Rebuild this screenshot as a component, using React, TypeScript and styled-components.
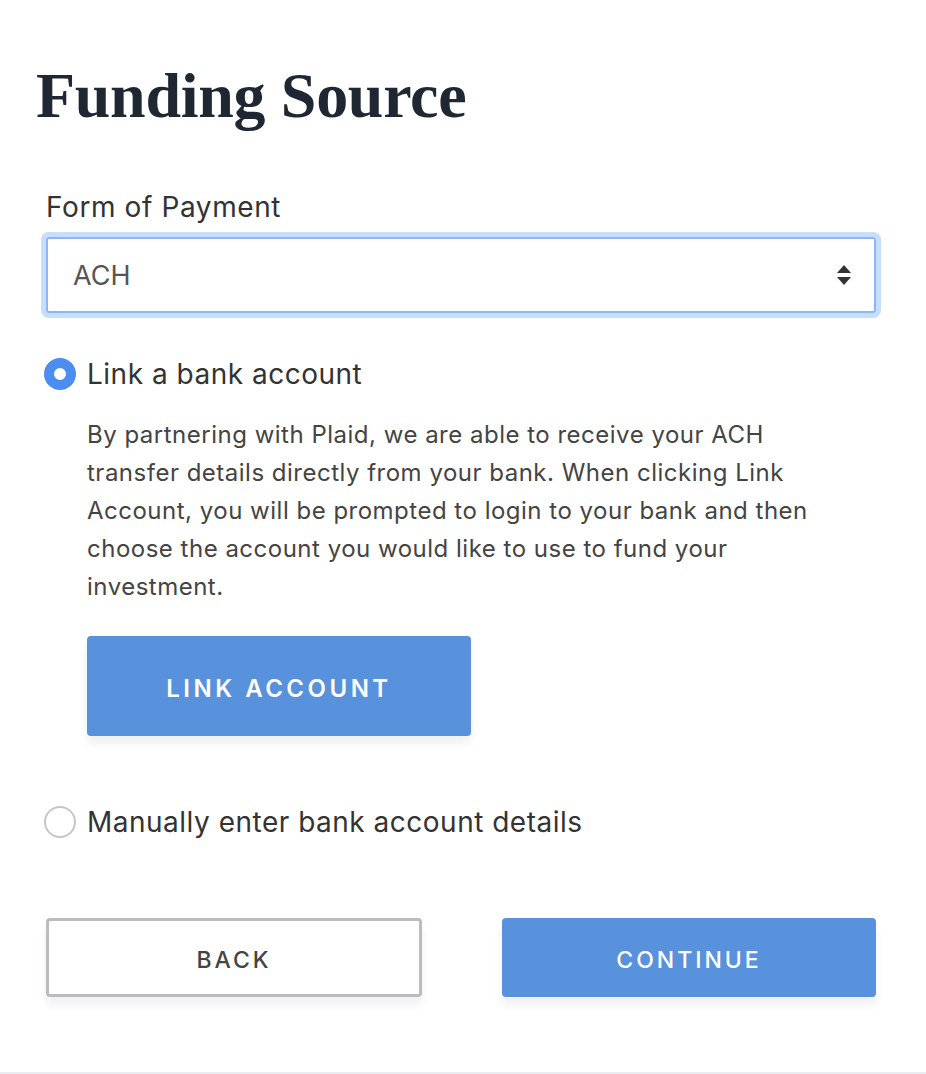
import React from 'react';
import styled, { createGlobalStyle } from 'styled-components';

const Global = createGlobalStyle`
  html, body {
    margin: 0;
    padding: 0;
    background: #ffffff;
  }
  body {
    font-family: Inter, "Noto Sans", sans-serif;
    color: #333333;
  }
`;

const Page = styled.div`
  width: 926px;
  height: 1074px;
  box-sizing: border-box;
  border-bottom: 2px solid #e9edf2;
  padding: 58px 50px 0 46px;
  display: flex;
  flex-direction: column;
`;

const Title = styled.h1`
  margin: 0 0 0 -10px;
  font-family: "Liberation Serif", "Times New Roman", serif;
  font-weight: bold;
  font-size: 64px;
  line-height: 76px;
  color: #1f2733;
  letter-spacing: -0.3px;
`;

const Label = styled.div`
  margin-top: 55px;
  font-size: 28px;
  line-height: 36px;
  letter-spacing: 0.6px;
  color: #333333;
`;

const SelectBox = styled.div`
  margin-top: 12px;
  height: 76px;
  box-sizing: border-box;
  border: 2px solid #8db7f2;
  border-radius: 3px;
  box-shadow: 0 0 0 5px #c6ddfb;
  display: flex;
  align-items: center;
  justify-content: space-between;
  padding: 0 22px 0 25px;
  font-size: 27px;
  color: #555555;
`;

const Options = styled.div`
  margin-top: 41px;
  display: flex;
  flex-direction: column;
`;

const OptionRow = styled.div`
  display: flex;
  align-items: center;
  gap: 11px;
  margin-left: -2px;
`;

const Radio = styled.span<{ checked?: boolean }>`
  width: 32px;
  height: 32px;
  box-sizing: border-box;
  border-radius: 50%;
  flex: none;
  background: #ffffff;
  border: ${({ checked }) => (checked ? '10px solid #4c8df0' : '2px solid #c4c6c9')};
`;

const OptionText = styled.span`
  font-size: 28px;
  line-height: 40px;
  letter-spacing: 0.5px;
  color: #333333;
`;

const Detail = styled.div`
  padding-left: 41px;
  margin-top: 22px;
`;

const Paragraph = styled.p`
  margin: 0;
  font-size: 24px;
  line-height: 38px;
  letter-spacing: 0.5px;
  color: #444444;
  max-width: 735px;
`;

const Button = styled.button<{ variant?: 'primary' | 'outline'; width: number }>`
  width: ${({ width }) => width}px;
  box-sizing: border-box;
  padding: 4px 0 0;
  border-radius: 4px;
  font-family: Inter, "Noto Sans", sans-serif;
  font-weight: 600;
  text-transform: uppercase;
  cursor: pointer;
  box-shadow: 0 8px 10px rgba(0, 0, 0, 0.06);
  background: ${({ variant }) => (variant === 'outline' ? '#ffffff' : '#5891dc')};
  color: ${({ variant }) => (variant === 'outline' ? '#444444' : '#ffffff')};
  border: ${({ variant }) => (variant === 'outline' ? '3px solid #b9bcc1' : 'none')};
`;

const LinkButton = styled(Button)`
  display: block;
  margin-top: 30px;
  height: 100px;
  font-size: 24px;
  letter-spacing: 3.5px;
`;

const ManualRow = styled(OptionRow)`
  margin-top: 66px;
`;

const Footer = styled.div`
  margin-top: 76px;
  display: flex;
  justify-content: space-between;
`;

const FooterButton = styled(Button)`
  height: 79px;
  font-size: 23px;
  letter-spacing: 3px;
  font-weight: 500;
`;

const Arrows = () => (
  <svg width="16" height="22" viewBox="0 0 16 22">
    <path d="M8 1 L15 9 L1 9 Z" fill="#333" />
    <path d="M8 21 L15 13 L1 13 Z" fill="#333" />
  </svg>
);

export default function App() {
  return (
    <>
      <Global />
      <Page>
        <Title>Funding Source</Title>
        <Label>Form of Payment</Label>
        <SelectBox>
          <span>ACH</span>
          <Arrows />
        </SelectBox>
        <Options>
          <OptionRow>
            <Radio checked />
            <OptionText>Link a bank account</OptionText>
          </OptionRow>
          <Detail>
            <Paragraph>
              By partnering with Plaid, we are able to receive your ACH transfer details directly
              from your bank. When clicking Link Account, you will be prompted to login to your
              bank and then choose the account you would like to use to fund your investment.
            </Paragraph>
            <LinkButton width={384}>Link Account</LinkButton>
          </Detail>
          <ManualRow>
            <Radio />
            <OptionText>Manually enter bank account details</OptionText>
          </ManualRow>
        </Options>
        <Footer>
          <FooterButton variant="outline" width={376}>Back</FooterButton>
          <FooterButton width={374}>Continue</FooterButton>
        </Footer>
      </Page>
    </>
  );
}
